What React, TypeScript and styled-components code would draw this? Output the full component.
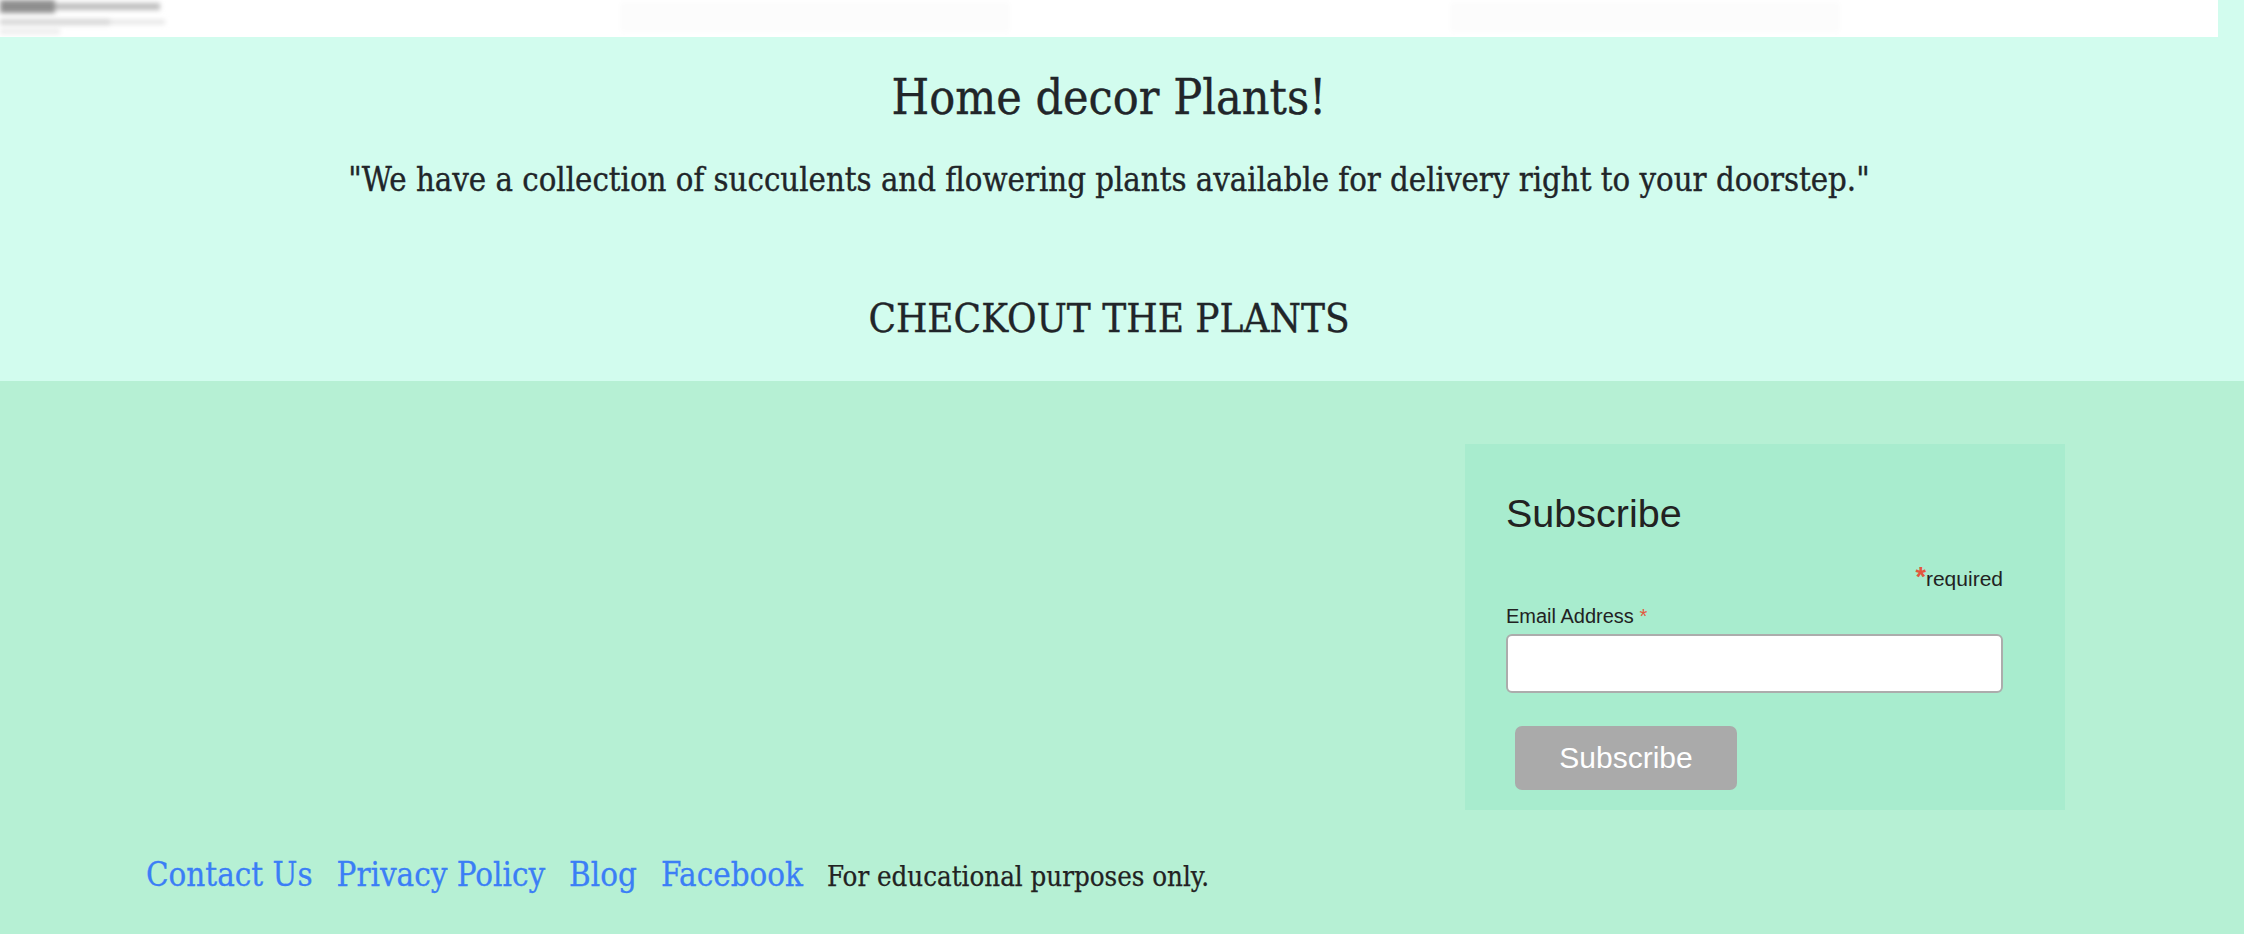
import React from "react";
import styled, { createGlobalStyle } from "styled-components";

const GlobalStyle = createGlobalStyle`
  html, body {
    margin: 0;
    padding: 0;
    overflow: hidden;
    background: #b6f0d4;
  }
  * { box-sizing: border-box; }
`;

const slab = `"DejaVu Serif Condensed", "DejaVu Serif", serif`;
const sans = `"Liberation Sans", Arial, sans-serif`;

const Page = styled.div`
  width: 2244px;
  height: 934px;
  display: flex;
  flex-direction: column;
`;

const Hero = styled.section`
  background: #d2fcee;
  display: flex;
  flex-direction: column;
  align-items: center;
  padding-bottom: 43px;
  padding-right: 26px;
  color: #212529;
  font-family: ${slab};
  font-stretch: condensed;
  -webkit-text-stroke: 0.35px #212529;
`;

const ImageStrip = styled.div`
  align-self: flex-start;
  width: 2218px;
  height: 37px;
  background: #ffffff;
  overflow: hidden;
  -webkit-text-stroke: 0;
`;

const Title = styled.h1`
  margin: 36px 0 0;
  font-size: 48px;
  line-height: 48px;
  font-weight: 400;
`;

const Quote = styled.p`
  margin: 43px 0 0;
  font-size: 32.6px;
  line-height: 33px;
`;

const Checkout = styled.h2`
  margin: 101px 0 0;
  font-size: 40px;
  line-height: 40px;
  font-weight: 400;
  text-transform: uppercase;
`;

const Footer = styled.footer`
  flex: 1;
  background: #b6f0d4;
  display: flex;
  flex-direction: column;
  padding: 63px 179px 0 146px;
`;

const FormRow = styled.div`
  display: flex;
  justify-content: flex-end;
`;

const SubscribeBox = styled.form`
  width: 600px;
  height: 366px;
  background: #a8ecce;
  padding: 0 62px 0 41px;
  display: flex;
  flex-direction: column;
  font-family: ${sans};
  color: #222;
`;

const BoxTitle = styled.h2`
  margin: 50px 0 0;
  font-size: 39.5px;
  line-height: 39px;
  font-weight: 400;
`;

const RequiredNote = styled.div`
  margin-top: 35px;
  align-self: flex-end;
  height: 21px;
  font-size: 21px;
  line-height: 21px;
`;

const Star = styled.span<{ $big?: boolean }>`
  color: #e2583e;
  font-size: ${(p) => (p.$big ? "27px" : "inherit")};
  font-weight: ${(p) => (p.$big ? 700 : 400)};
  line-height: ${(p) => (p.$big ? 0 : "inherit")};
`;

const Label = styled.label`
  display: block;
  margin-top: 17px;
  font-size: 20px;
  line-height: 20px;
`;

const EmailInput = styled.input`
  margin-top: 8px;
  width: 100%;
  height: 59px;
  border: 2px solid #acacac;
  border-radius: 6px;
  background: #fff;
  font-size: 20px;
  padding: 0 12px;
  outline: none;
`;

const SubmitButton = styled.button`
  margin: 33px 0 0 9px;
  width: 222px;
  height: 64px;
  border: none;
  border-radius: 7px;
  background: #aaaaaa;
  color: #fff;
  font-family: ${sans};
  font-size: 30px;
  display: flex;
  align-items: center;
  justify-content: center;
  padding: 0;
`;

const LinksRow = styled.nav`
  margin-top: 49px;
  display: flex;
  align-items: baseline;
  gap: 24px;
  font-family: ${slab};
  font-stretch: condensed;
`;

const FooterLink = styled.a`
  color: #3b7ef6;
  font-size: 32.8px;
  line-height: 32px;
  text-decoration: none;
  -webkit-text-stroke: 0.3px #3b7ef6;
`;

const Note = styled.span`
  color: #222;
  font-size: 27.4px;
  line-height: 32px;
  -webkit-text-stroke: 0.25px #222;
`;

const StripPicture = () => (
  <svg width="2218" height="37" viewBox="0 0 2218 37">
    <defs>
      <filter id="blur" x="-20%" y="-50%" width="140%" height="200%">
        <feGaussianBlur stdDeviation="2.5" />
      </filter>
    </defs>
    <g filter="url(#blur)">
      <rect x="0" y="0" width="55" height="13" fill="#8f8f8f" />
      <rect x="55" y="3" width="105" height="7" fill="#bdbdbd" />
      <rect x="0" y="19" width="110" height="6" fill="#d6d6d6" />
      <rect x="110" y="20" width="55" height="4" fill="#e2e2e2" />
      <rect x="0" y="29" width="60" height="5" fill="#ebebeb" />
      <rect x="620" y="2" width="390" height="30" fill="#fcfcfc" />
      <rect x="1450" y="2" width="390" height="30" fill="#fcfcfc" />
    </g>
  </svg>
);

export default function App() {
  return (
    <>
      <GlobalStyle />
      <Page>
        <Hero>
          <ImageStrip>
            <StripPicture />
          </ImageStrip>
          <Title>Home decor Plants!</Title>
          <Quote>
            "We have a collection of succulents and flowering plants available for delivery right to
            your doorstep."
          </Quote>
          <Checkout>Checkout the plants</Checkout>
        </Hero>
        <Footer>
          <FormRow>
            <SubscribeBox onSubmit={(e) => e.preventDefault()}>
              <BoxTitle>Subscribe</BoxTitle>
              <RequiredNote>
                <Star $big>*</Star>required
              </RequiredNote>
              <Label htmlFor="mce-EMAIL">
                Email Address <Star>*</Star>
              </Label>
              <EmailInput id="mce-EMAIL" type="email" name="EMAIL" />
              <SubmitButton type="submit">Subscribe</SubmitButton>
            </SubscribeBox>
          </FormRow>
          <LinksRow>
            <FooterLink href="#">Contact Us</FooterLink>
            <FooterLink href="#">Privacy Policy</FooterLink>
            <FooterLink href="#">Blog</FooterLink>
            <FooterLink href="#">Facebook</FooterLink>
            <Note>For educational purposes only.</Note>
          </LinksRow>
        </Footer>
      </Page>
    </>
  );
}
